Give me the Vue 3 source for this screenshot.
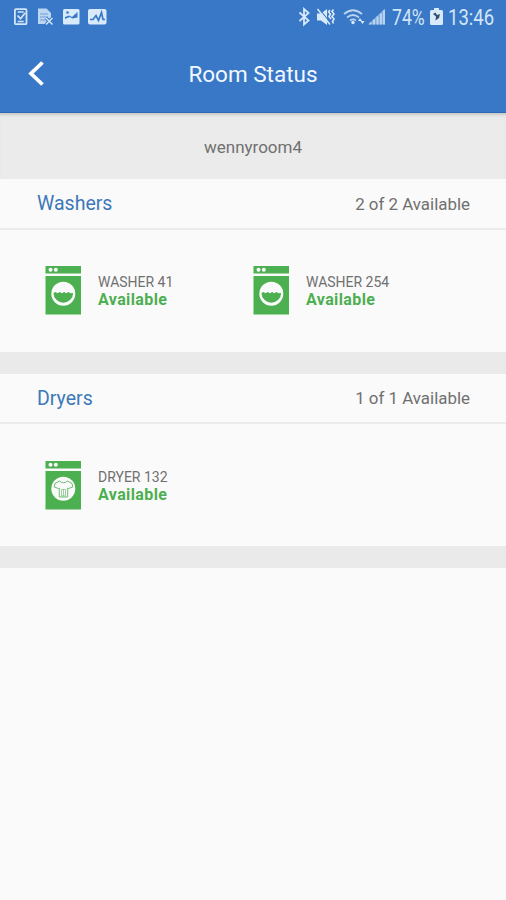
<template>
  <div class="page">
    <header class="top">
      <div class="status-bar">
        <svg class="notifications" width="94" height="20" viewBox="0 0 94 20">
          <!-- task -->
          <rect x="1.9" y="2.2" width="11.6" height="15" rx="1" fill="#3978c6" stroke="#d2e5f8" stroke-width="1.8" />
          <path d="M4.7 5h6M4.7 14.5h6M4.5 8.5l3 3.2 4.8-6" fill="none" stroke="#d2e5f8" stroke-width="1.7" />
          <!-- document -->
          <path d="M25 1.5h8.5l4.5 4.5v11H25z" fill="#bdd6f1" />
          <path d="M27 7h8M27 10h8M27 13h5" stroke="#6f9fd7" stroke-width="1" />
          <path d="M33 11l6.5 6.5M39.5 11L33 17.5" stroke="#3978c6" stroke-width="3.4" />
          <path d="M33 11l6.5 6.5M39.5 11L33 17.5" stroke="#d2e5f8" stroke-width="1.5" />
          <!-- picture -->
          <rect x="50" y="2" width="16.5" height="15.5" rx="1.5" fill="#d8e9fa" />
          <path d="M52 12v-2l4-1.5 3 1.5 5.5-5v5.5l-5 1-3-1.5z" fill="#3978c6" />
          <circle cx="54.5" cy="5.5" r="1.3" fill="#3978c6" />
          <!-- chart -->
          <rect x="75" y="2" width="18.5" height="15.5" rx="2" fill="#d8e9fa" />
          <path d="M77 12.5h3l3-4 2.5 5 3-8 1.5 7h2" fill="none" stroke="#3978c6" stroke-width="1.7" />
        </svg>
        <div class="system">
          <svg width="90" height="20" viewBox="0 0 90 20">
            <!-- bluetooth -->
            <path d="M1.5 5.5l9 8L6 17.5V2l4.5 4-9 8" fill="none" stroke="#d8e9fa" stroke-width="1.8" />
            <!-- vibrate -->
            <path d="M19 6.5h4l6-4.5v16l-6-4.5h-4z" fill="#d8e9fa" />
            <path d="M21 1.5l12 15" stroke="#3978c6" stroke-width="1.2" />
            <path d="M19.5 2l12.5 15.5" stroke="#d8e9fa" stroke-width="1.5" />
            <path d="M32 3l-1.5 2 2 2-1.5 2.5 2 2.5M35.5 2.5L34 4.5l2 2.5-2 2.5 2 2.5-1.5 2.5 1 2" fill="none" stroke="#d8e9fa" stroke-width="1.6" />
            <!-- wifi -->
            <g fill="none" stroke="#bad4f0" stroke-width="1.7">
              <path d="M46 7q9-7.5 18 0M49 10.5q6-5 12 0M52 13.7q3-2.5 6 0" />
            </g>
            <circle cx="55" cy="15.5" r="1.7" fill="#d8e9fa" />
            <path d="M60 14l2-3 2 3zM62.5 14h4l-2 3z" fill="#d8e9fa" />
            <!-- signal -->
            <path d="M70 17.5L87 1.5v16z" fill="#84aee0" />
            <path d="M72.5 15.5v2M76 12.5v5M79.5 9.5v8M83 6.5v11M86 3v14.5" stroke="#bad4f0" stroke-width="1.9" />
          </svg>
          <div class="percent"><span>74%</span></div>
          <svg class="battery" width="13" height="18" viewBox="0 0 13 18">
            <path d="M4 0h5v2h2.5Q13 2 13 3.500v12Q13 17 11.500 17h-10Q0 17 0 15.500v-12Q0 2 1.500 2H4z" fill="#d8e9fa" />
            <path d="M3 6l2.500-1.500L7 7l3-1-1 4-3.500 2.500.5-4z" fill="#34506f" />
          </svg>
          <div class="clock"><span>13:46</span></div>
        </div>
      </div>
      <div class="title-bar">
        <button class="back" aria-label="Back">
          <svg width="18" height="28" viewBox="0 0 18 28">
            <path d="M15.5 2.500L4 13.500l11.500 11" fill="none" stroke="#fff" stroke-width="3.800" />
          </svg>
        </button>
        <h1>Room Status</h1>
      </div>
    </header>

    <div class="room"><span>{{ roomName }}</span></div>

    <section v-for="group in groups" :key="group.name" class="group">
      <div class="group-head">
        <h2>{{ group.name }}</h2>
        <span class="count">{{ group.count }}</span>
      </div>
      <div class="machines">
        <div v-for="machine in group.machines" :key="machine" class="machine">
          <svg class="machine-icon" width="37" height="49" viewBox="0 0 37 49">
            <path d="M.5 0h35.5v7.500H.5zM.5 10h35.500v38.500H.5z" fill="#4caf50" />
            <circle cx="5.500" cy="3.800" r="2" fill="#fafafa" />
            <circle cx="10.800" cy="3.800" r="2" fill="#fafafa" />
            <circle cx="18.300" cy="27.800" r="12" fill="#fafafa" />
            <path
              v-if="group.type === 'washer'"
              d="M8.500 26.900l2-.8 2 1.200 2.200-1.200 2.200 1.200 2.200-1.200 2.200 1.200 2.200-1.200 2.200 1.200 2.400-.4A9.800 9.800 0 0 1 8.500 26.900z"
              fill="#4caf50"
            />
            <g v-else fill="none" stroke="#5fb763" stroke-width=".9">
              <path d="M14.500 20l-4.500 2.500-.8 3.500 4.300 1.500.8-.5v9h8.400v-9l.8.500 4.300-1.500-.8-3.500-4.500-2.500q-4 3.500-8 0z" />
              <path d="M16.500 28.500h4v6.500h-4zM18.500 28v7" stroke-width=".6" />
            </g>
          </svg>
          <div class="label">
            <span class="name">{{ machine }}</span>
            <span class="state">Available</span>
          </div>
        </div>
      </div>
    </section>
  </div>
</template>

<script setup>
const roomName = 'wennyroom4'

const groups = [
  {
    name: 'Washers',
    type: 'washer',
    count: '2 of 2 Available',
    machines: ['WASHER 41', 'WASHER 254'],
  },
  {
    name: 'Dryers',
    type: 'dryer',
    count: '1 of 1 Available',
    machines: ['DRYER 132'],
  },
]
</script>

<style>
body {
  background: #fafafa;
}
</style>

<style scoped>
.page {
  min-height: 900px;
  background: #fafafa;
  font-family: Roboto, sans-serif;
  color: #707070;
}

.page svg {
  display: block;
  flex: none;
}

.top {
  height: 113px;
  box-sizing: border-box;
  background: #3978c6;
  border-bottom: 1px solid #2c68b3;
}

.status-bar {
  height: 36px;
  box-sizing: border-box;
  padding: 7px 12px 0 13px;
  display: flex;
  justify-content: space-between;
}

.system {
  display: flex;
  line-height: 22px;
  font-size: 21.5px;
  color: #d2e5f8;
}

.system span {
  display: inline-block;
  transform: scaleX(0.86);
  transform-origin: left;
}

.percent {
  width: 34px;
  margin-left: 4px;
}

.percent span {
  transform: scaleX(0.82);
}

.battery {
  margin: 1px 5px 0 4px;
}

.clock {
  width: 46px;
}

.title-bar {
  height: 76px;
  display: flex;
  align-items: center;
  justify-content: center;
  padding: 0 27px;
}

.back {
  width: 18px;
  padding: 0;
  border: none;
  background: none;
}

h1,
h2 {
  margin: 0;
  font-weight: 400;
}

h1 {
  flex: 1;
  margin-right: 18px;
  text-align: center;
  font-size: 22.5px;
  line-height: 28px;
  color: #f2f8ff;
}

.room {
  height: 66px;
  box-sizing: border-box;
  padding-top: 2px;
  display: flex;
  align-items: center;
  justify-content: center;
  background: #ebebeb;
  box-shadow: inset 0 4px 3px -2px #c8c8c8;
  font-size: 17px;
  line-height: 20px;
}

.group {
  border-bottom: 22px solid #eaeaea;
}

.group-head {
  height: 48.5px;
  padding: 0 36px 0 37px;
  display: flex;
  align-items: center;
  justify-content: space-between;
  border-bottom: 2px solid #ebebeb;
}

h2 {
  padding-top: 1px;
  font-size: 19.5px;
  color: #3c78b8;
}

.count {
  padding-top: 1px;
  font-size: 16.9px;
}

.machines {
  height: 122px;
  display: flex;
  align-items: flex-start;
  box-sizing: border-box;
  padding: 36.5px 45px 0;
}

.machine {
  width: 208px;
  display: flex;
}

.label {
  display: flex;
  flex-direction: column;
  margin: 8px 0 0 16px;
  line-height: 17px;
}

.name {
  font-size: 14px;
}

.state {
  font-size: 16px;
  font-weight: 700;
  letter-spacing: 0.4px;
  color: #4caf50;
}
</style>
